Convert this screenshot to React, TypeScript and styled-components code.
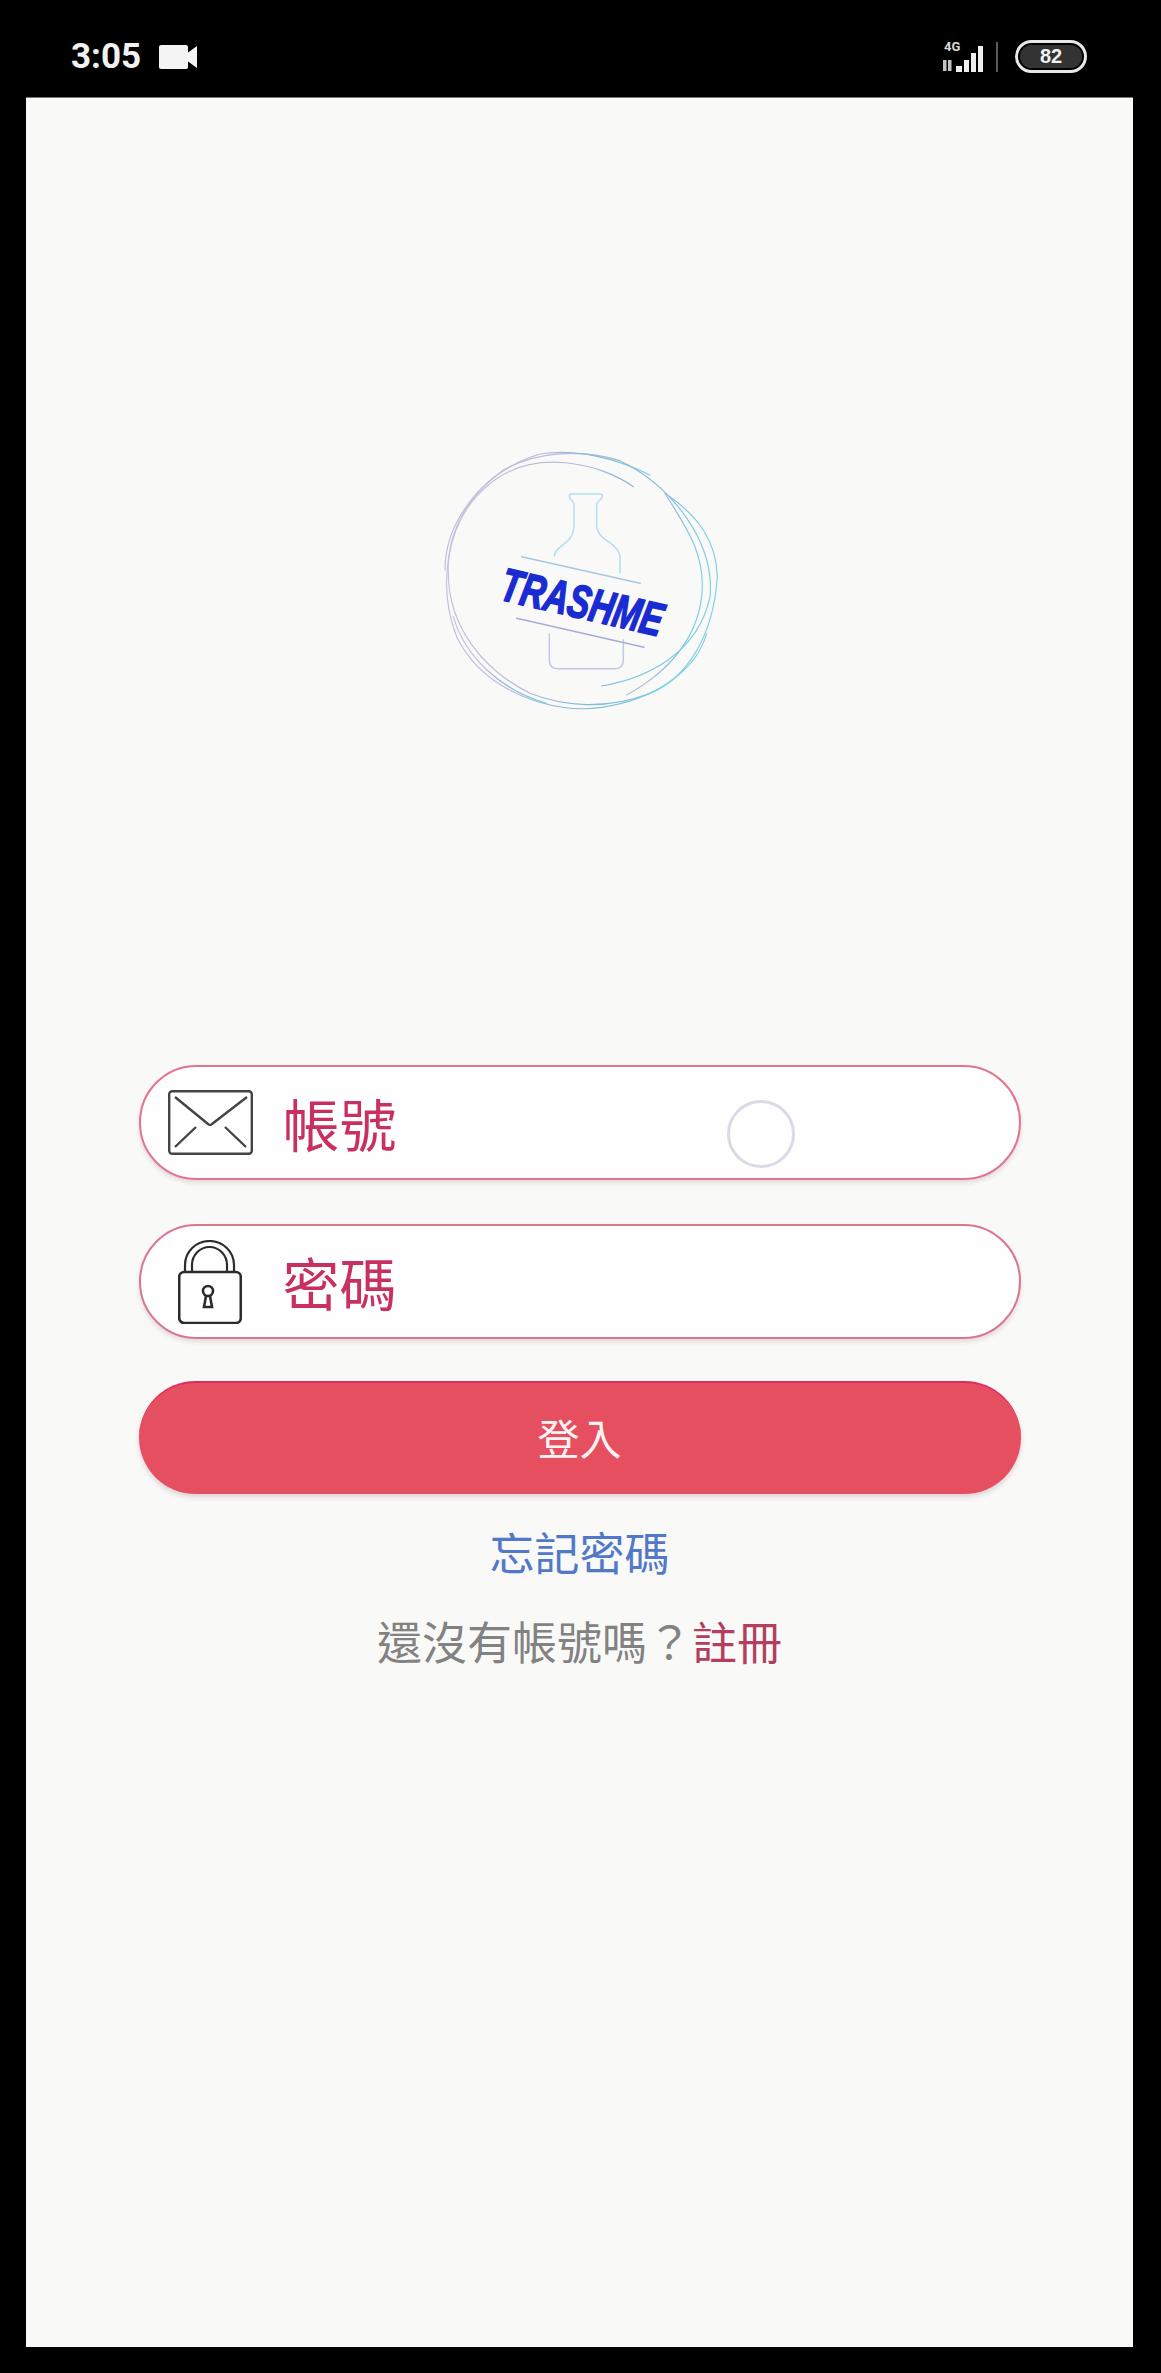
import React from "react";
import styled, { createGlobalStyle } from "styled-components";

const Global = createGlobalStyle`
  html, body { margin: 0; padding: 0; background: #000; }
  #root { width: 1161px; height: 2373px; }
  * { box-sizing: border-box; }
`;

const CJK = `"Noto Sans CJK TC", "Noto Sans CJK SC", "Noto Sans", sans-serif`;

const Page = styled.div`
  width: 1161px;
  height: 2373px;
  background: #000;
  display: flex;
  flex-direction: column;
  overflow: hidden;
`;

const StatusBar = styled.header`
  height: 97px;
  flex: none;
  display: flex;
  align-items: center;
  justify-content: space-between;
  padding: 16px 74px 0 71px;
  color: #f2f2f2;
`;

const StatusGroup = styled.div<{ $gap: number }>`
  display: flex;
  align-items: center;
  gap: ${(p) => p.$gap}px;
`;

const Clock = styled.span`
  font: 700 35px/40px Roboto, "Liberation Sans", sans-serif;
  letter-spacing: 0;
`;

const Battery = styled.div`
  width: 72px;
  height: 33px;
  border: 3px solid #e8e8e8;
  border-radius: 17px;
  padding: 2px;
  display: flex;
`;

const BatteryFill = styled.span`
  flex: 1;
  border-radius: 12px;
  background: #333;
  color: #f2f2f2;
  font: 700 20px/23px "Liberation Sans", sans-serif;
  text-align: center;
`;

const SignalText = styled.text`
  font: 700 13px Roboto, "Liberation Sans", sans-serif;
  fill: #d8d8d8;
`;

const Screen = styled.main`
  width: 1107px;
  height: 2250px;
  margin-left: 26px;
  flex: none;
  background: #f9f9f7;
  border-top: 1px solid #777;
  display: flex;
  flex-direction: column;
  align-items: center;
  padding-top: 332px;
`;

const LogoSvg = styled.svg`
  width: 320px;
  height: 300px;
  flex: none;
  display: block;
`;

const LogoWord = styled.text`
  font: italic 700 140px "Liberation Sans", sans-serif;
  fill: #1a2bd2;
  stroke: #1a2bd2;
  stroke-width: 5px;
`;

const Form = styled.section`
  width: 882px;
  margin-top: 335px;
  display: flex;
  flex-direction: column;
  align-items: stretch;
`;

const Field = styled.div<{ $gapAfter: number; $edge: string }>`
  position: relative;
  height: 115px;
  margin-bottom: ${(p) => p.$gapAfter}px;
  background: #fefefe;
  border: 2px solid ${(p) => p.$edge};
  border-radius: 58px;
  box-shadow: 0 3px 4px rgba(120, 60, 80, 0.16);
  display: flex;
  align-items: center;
  padding-left: 27px;
`;

const IconSlot = styled.span`
  width: 85px;
  flex: none;
  display: flex;
  justify-content: center;
`;

const FieldLabel = styled.span`
  margin-left: 30px;
  margin-bottom: 2px;
  font: 400 57px/70px ${CJK};
  color: #c8305f;
`;

const TouchRing = styled.span`
  position: absolute;
  left: 586px;
  top: 33px;
  width: 68px;
  height: 68px;
  border: 3px solid #d8dae6;
  border-radius: 50%;
`;

const LoginButton = styled.button`
  height: 113px;
  border: none;
  border-top: 2px solid #d92f5e;
  border-radius: 57px;
  background: #e64f5f;
  box-shadow: 0 3px 5px rgba(120, 60, 80, 0.2);
  color: #fdf3f3;
  font: 400 42px/58px ${CJK};
  padding: 0 0 3px;
  margin-bottom: 28px;
`;

const LinkLine = styled.p<{ $tone: string }>`
  margin: 0 0 29px;
  text-align: center;
  font: 400 45px/60px ${CJK};
  color: ${(p) => p.$tone};
  opacity: 0.95;
`;

const RegisterLink = styled.span`
  color: #b03556;
`;

const CameraIcon = () => (
  <svg width="38" height="26" viewBox="0 0 38 26" aria-hidden="true">
    <rect x="0" y="1" width="29" height="24" rx="2" fill="#f4f4f4" />
    <path d="M27 10 L38 2 V24 L27 16 Z" fill="#f4f4f4" />
  </svg>
);

const SignalIcon = () => (
  <svg width="60" height="34" viewBox="0 0 60 34" aria-hidden="true">
    <SignalText x="3" y="11">4G</SignalText>
    <rect x="2" y="20" width="3.5" height="11" fill="#c4c4c4" />
    <rect x="7" y="20" width="3.5" height="11" fill="#c4c4c4" />
    <path d="M15 26 h6 v6 h-6z M23 20 h5 v12 h-5z M30 13 h5 v19 h-5z M37 6 h5 v26 h-5z" fill="#eeeeee" />
    <rect x="55" y="2" width="2" height="30" fill="#5a5a5a" />
  </svg>
);

const EnvelopeIcon = () => (
  <svg width="85" height="65" viewBox="0 0 85 65" fill="none" stroke="#444" strokeWidth="2.4" aria-hidden="true">
    <rect x="1.2" y="1.2" width="82.6" height="62.6" rx="3" />
    <path d="M7 7 L40 34 Q42 36 44 34 L79 7" />
    <path d="M7 57 L28 37 M57 37 L78 57" />
  </svg>
);

const LockIcon = () => (
  <svg width="64" height="84" viewBox="0 0 64 84" fill="none" stroke="#2c2c2c" strokeWidth="2.2" aria-hidden="true">
    <rect x="1.2" y="32" width="61.6" height="51" rx="5" strokeWidth="2.6" />
    <path d="M7 32 V25 A24.5 24 0 0 1 56 25 V32" />
    <path d="M14 32 V25 A17.5 18 0 0 1 49 25 V32" />
    <circle cx="30" cy="51" r="5" strokeWidth="2.6" />
    <path d="M28 56 L26 67 H34 L32 56" strokeWidth="2.6" />
  </svg>
);

const Logo = () => (
  <LogoSvg viewBox="0 0 960 900" role="img" aria-label="TRASHME">
    <defs>
      <linearGradient id="ring" x1="0" y1="0" x2="1" y2="0.25">
        <stop offset="0" stopColor="#c6c3de" />
        <stop offset="0.5" stopColor="#b8b8da" />
        <stop offset="0.68" stopColor="#84b8d6" />
        <stop offset="1" stopColor="#7ed0e4" />
      </linearGradient>
    </defs>
    <g fill="none" stroke="url(#ring)" strokeWidth="3.5" strokeLinecap="round">
      <path d="M640 170 C540 100 340 50 205 165 C70 275 55 480 110 620 C190 785 400 855 545 832 C705 810 830 720 860 610" />
      <path d="M545 768 C680 745 835 670 870 500 C885 340 760 170 600 92 C480 55 350 65 250 120 C150 190 80 300 85 430 C85 590 190 720 330 790 C430 830 560 840 690 790 C800 745 880 620 892 440 C890 340 840 260 735 190" />
      <path d="M735 190 C790 280 860 370 845 500 C830 630 740 730 620 795" />
      <path d="M75 420 C75 290 170 130 360 72 C470 55 590 85 690 135" />
      <path d="M100 560 C135 680 240 780 380 820" />
    </g>
    <g fill="none" strokeWidth="4.5" strokeLinecap="round" strokeLinejoin="round">
      <path
        d="M403 378 C404 345 462 345 462 285 V222 C462 212 448 212 448 198 Q448 192 455 192 H540 Q547 192 547 198 C547 212 530 212 530 222 V285 C530 335 600 335 600 385 V428"
        stroke="#b2e0ee"
      />
      <path d="M388 612 V690 Q388 716 414 716 H584 Q610 716 610 690 V630" stroke="#c3c8e8" />
      <path d="M305 380 L660 460" stroke="#a8c6de" />
      <path d="M290 565 L672 652" stroke="#a8abd8" />
    </g>
    <LogoWord x="487" y="565" textAnchor="middle" textLength="495" lengthAdjust="spacingAndGlyphs" transform="rotate(13 487 515)">
      TRASHME
    </LogoWord>
  </LogoSvg>
);

export default function App() {
  return (
    <Page>
      <Global />
      <StatusBar>
        <StatusGroup $gap={18}>
          <Clock>3:05</Clock>
          <CameraIcon />
        </StatusGroup>
        <StatusGroup $gap={14}>
          <SignalIcon />
          <Battery>
            <BatteryFill>82</BatteryFill>
          </Battery>
        </StatusGroup>
      </StatusBar>
      <Screen>
        <Logo />
        <Form>
          <Field $gapAfter={44} $edge="#e2748e">
            <IconSlot>
              <EnvelopeIcon />
            </IconSlot>
            <FieldLabel>帳號</FieldLabel>
            <TouchRing />
          </Field>
          <Field $gapAfter={42} $edge="#d8788f">
            <IconSlot>
              <LockIcon />
            </IconSlot>
            <FieldLabel>密碼</FieldLabel>
          </Field>
          <LoginButton type="button">登入</LoginButton>
          <LinkLine $tone="#4a72c8">忘記密碼</LinkLine>
          <LinkLine $tone="#7c7c7c">
            還沒有帳號嗎？<RegisterLink>註冊</RegisterLink>
          </LinkLine>
        </Form>
      </Screen>
    </Page>
  );
}
